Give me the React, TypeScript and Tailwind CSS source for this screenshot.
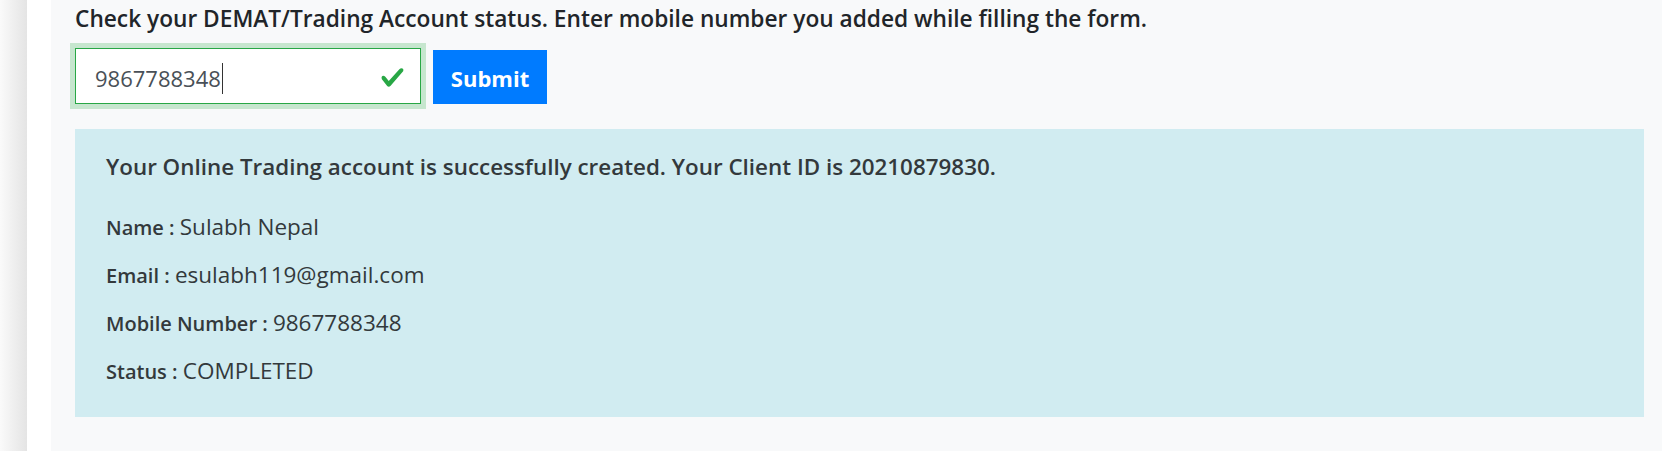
import React from "react"

const details = [
  { label: "Name", value: "Sulabh Nepal" },
  { label: "Email", value: "esulabh119@gmail.com" },
  { label: "Mobile Number", value: "9867788348" },
  { label: "Status", value: "COMPLETED" },
]

const ValidCheck = () => (
  <svg viewBox="0 0 8 8" className="absolute right-[15px] top-[16px] h-[25px] w-[25px]">
    <path
      fill="#28a745"
      d="M2.3 6.73L.6 4.53c-.4-1.04.46-1.4 1.1-.8l1.1 1.4 3.4-3.8c.6-.63 1.6-.27 1.2.7l-4 4.6c-.43.5-.8.4-1.1.1z"
    />
  </svg>
)

export default function App() {
  return (
    <div className="flex h-[451px] w-full bg-[#f8f9fa] font-['Open_Sans',sans-serif]">
      {/* sidebar edge */}
      <div className="w-[27px] shrink-0 bg-gradient-to-r from-[#fafafa] to-[#e4e4e4]" />
      <div className="w-[24px] shrink-0 bg-white" />

      <main className="flex-1 pl-[24px] pr-[18px]">
        <h5 className="h-[35px] pt-[2px] text-[22.7px] font-semibold leading-[33px] text-[#212529]">
          Check your DEMAT/Trading Account status. Enter mobile number you added while filling the form.
        </h5>

        <div className="mt-[13px] flex items-start">
          <div className="relative flex h-[56px] w-[346px] items-center border border-[#28a745] bg-white pl-[19px] pt-[4px] shadow-[0_0_0_5px_#c6e6ce]">
            <span className="text-[22px] leading-[30px] text-[#495057]">9867788348</span>
            <span className="ml-[1px] h-[31px] w-[1px] bg-[#333]" />
            <ValidCheck />
          </div>
          <button className="ml-[12px] mt-[2px] flex h-[54px] w-[114px] items-center justify-center bg-[#007bff] pt-[3px] text-[22px] font-bold text-white">
            Submit
          </button>
        </div>

        <div className="mt-[25px] h-[288px] bg-[#d1ecf1] pl-[31px] pt-[21px] text-[#33393c]">
          <p className="mb-[27px] h-[33px] text-[22.4px] font-semibold leading-[33px]">
            Your Online Trading account is successfully created. Your Client ID is 20210879830.
          </p>
          {details.map((d) => (
            <p key={d.label} className="mb-[15px] h-[33px] text-[22.5px] leading-[33px]">
              <span className="text-[20px] font-semibold">{d.label} : </span>
              <span>{d.value}</span>
            </p>
          ))}
        </div>
      </main>
    </div>
  )
}
